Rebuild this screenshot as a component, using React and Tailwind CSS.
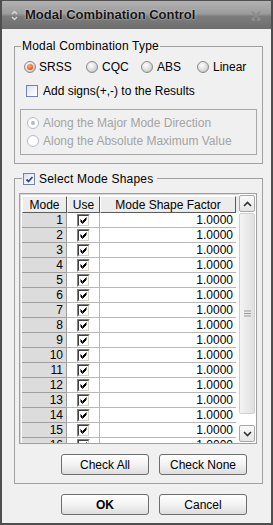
import React from "react";

function Radio({ checked, disabled }) {
  if (disabled) {
    return (
      <span className="relative flex h-[12px] w-[12px] shrink-0 items-center justify-center rounded-full border border-[#b4b9c8] bg-white">
        {checked && <span className="h-[4px] w-[4px] rounded-full bg-[#b8b8c0]" />}
      </span>
    );
  }
  return (
    <span className="relative flex h-[12px] w-[12px] shrink-0 items-center justify-center rounded-full border border-[#8a8a8a] bg-[radial-gradient(circle_at_40%_35%,#ffffff_0%,#e2e2e2_45%,#b4b4b4_100%)]">
      {checked && (
        <span className="h-[6px] w-[6px] rounded-full bg-[radial-gradient(circle_at_40%_35%,#ffb080_0%,#f06020_60%,#c84010_100%)]" />
      )}
    </span>
  );
}

function XPCheck({ checked }) {
  return (
    <span className="flex h-[12px] w-[12px] shrink-0 items-center justify-center border border-[#6f86a8] bg-[linear-gradient(135deg,#d8e0ec_0%,#f4f6fa_60%,#ffffff_100%)]">
      {checked && (
        <svg width="9" height="9" viewBox="0 0 9 9">
          <path d="M1.5 4.5 L3.5 6.5 L7.5 2" fill="none" stroke="#2a45b0" strokeWidth="1.8" />
        </svg>
      )}
    </span>
  );
}

function ClassicCheck() {
  return (
    <span className="flex h-[13px] w-[13px] items-center justify-center border-t border-l border-t-[#808080] border-l-[#808080] border-b border-r border-b-white border-r-white">
      <span className="flex h-[11px] w-[11px] items-center justify-center border-t border-l border-t-[#404040] border-l-[#404040] border-b border-r border-b-[#d4d0c8] border-r-[#d4d0c8] bg-white">
        <svg width="9" height="9" viewBox="0 0 9 9">
          <path d="M1.5 3.5 L3.5 5.5 L7.5 1.5 M1.5 4.5 L3.5 6.5 L7.5 2.5 M1.5 5.5 L3.5 7.5 L7.5 3.5" fill="none" stroke="#000" strokeWidth="1" />
        </svg>
      </span>
    </span>
  );
}

function Btn({ children, bold }) {
  return (
    <button className={`flex h-[21px] w-[88px] items-center justify-center rounded-[3px] border border-[#6e6e6e] bg-[linear-gradient(#ffffff,#f4f4f4_45%,#dedede)] text-[12px] text-black ${bold ? "font-bold" : ""}`}>
      {children}
    </button>
  );
}

export default function App() {
  const rows = Array.from({ length: 16 }, (_, i) => i + 1);
  return (
    <div className="flex h-[525px] w-[273px] flex-col overflow-hidden border-x-2 border-b-2 border-[#4e4e4e] bg-[#f0f0f0] font-['Liberation_Sans',Arial,sans-serif] text-[12px] text-black">
      {/* Title bar */}
      <div className="flex h-[29px] shrink-0 items-center border-t border-[#505050] bg-[linear-gradient(#b2b2b2,#9c9c9c_45%,#7c7c7c_55%,#6e6e6e)] pl-[9px] pr-[9px]">
        <svg width="7" height="11" viewBox="0 0 7 11" className="mr-[7px]">
          <path d="M1 4 L3.5 1.5 L6 4 M1 7 L3.5 9.5 L6 7" fill="none" stroke="#d8d8d8" strokeWidth="1.3" />
        </svg>
        <span className="text-[13px] font-bold text-[#151515] [text-shadow:0_0_2px_#e8e8e8]">Modal Combination Control</span>
        <span className="ml-auto">
          <svg width="12" height="11" viewBox="0 0 12 11">
            <path d="M1.5 1 L10.5 10 M10.5 1 L1.5 10" stroke="#8c8c8c" strokeWidth="1.6" />
            <path d="M2 1 L5 1 M7 1 L10 1 M2 10 L5 10 M7 10 L10 10" stroke="#a0a0a0" strokeWidth="1" />
          </svg>
        </span>
      </div>

      {/* Body */}
      <div className="flex flex-col pl-[12px] pr-[8px] pt-[17px]">
        {/* Group 1 */}
        <div className="relative h-[118px] border border-[#a0a0a0]">
          <span className="absolute left-[6px] top-[-9px] bg-[#f0f0f0] px-[1px] leading-[16px] tracking-[0.2px]">Modal Combination Type</span>
          <div className="mt-[13px] flex h-[14px] items-center pl-[9px]">
            <div className="flex w-[62px] items-center gap-[3px]"><Radio checked /><span>SRSS</span></div>
            <div className="flex w-[55px] items-center gap-[4px]"><Radio /><span>CQC</span></div>
            <div className="flex w-[56px] items-center gap-[4px]"><Radio /><span>ABS</span></div>
            <div className="flex items-center gap-[4px]"><Radio /><span>Linear</span></div>
          </div>
          <div className="mt-[10px] flex h-[14px] items-center gap-[5px] pl-[11px]">
            <XPCheck />
            <span>Add signs(+,-) to the Results</span>
          </div>
          <div className="mx-[5px] mt-[11px] flex h-[46px] flex-col gap-[4px] border border-[#a8a8a8] pl-[6px] pt-[6px] text-[#a4a4a4]">
            <div className="flex h-[14px] items-center gap-[4px]"><Radio checked disabled /><span>Along the Major Mode Direction</span></div>
            <div className="flex h-[14px] items-center gap-[4px]"><Radio disabled /><span>Along the Absolute Maximum Value</span></div>
          </div>
        </div>

        {/* Group 2 */}
        <div className="relative mt-[14px] h-[306px] border border-[#a0a0a0]">
          <div className="absolute left-[7px] top-[-8px] flex items-center gap-[4px] bg-[#f0f0f0] pl-[1px] pr-[4px] leading-[16px]">
            <XPCheck checked />
            <span className="tracking-[0.2px]">Select Mode Shapes</span>
          </div>
          {/* table */}
          <div className="ml-[4px] mt-[14px] flex h-[251px] w-[238px] border border-[#a0a0a0] bg-white">
            <div className="flex flex-1 flex-col overflow-hidden border-l border-t border-[#d8d8d8] pl-[1px] pt-[1px]">
              <div className="flex h-[17px] shrink-0 bg-[#ececec]">
                <div className="flex w-[45px] items-center justify-center border-r border-b border-[#5a5a5a] border-l border-t border-l-white border-t-white">Mode</div>
                <div className="flex w-[33px] items-center justify-center border-r border-b border-[#5a5a5a] border-l border-t border-l-white border-t-white">Use</div>
                <div className="flex w-[136px] items-center justify-center border-r border-b border-[#5a5a5a] border-l border-t border-l-white border-t-white">Mode Shape Factor</div>
              </div>
              {rows.map((n) => (
                <div key={n} className="flex h-[15px] shrink-0">
                  <div className="flex w-[45px] items-center justify-end border-b border-r border-[#a0a0a0] bg-[#dcdcdc] pr-[3px]">{n}</div>
                  <div className="flex w-[33px] items-center justify-center border-b border-r border-[#b8b8b8] pl-[1px]"><ClassicCheck /></div>
                  <div className="flex w-[136px] items-center justify-end border-b border-[#b8b8b8] pr-[3px]">1.0000</div>
                </div>
              ))}
            </div>
            {/* scrollbar */}
            <div className="flex w-[17px] shrink-0 flex-col bg-white pt-[1px] pr-[1px]">
              <div className="flex h-[17px] items-center justify-center rounded-[2px] border border-[#a8a8a8] bg-[linear-gradient(#fafafa,#e4e4e4)]">
                <svg width="9" height="6" viewBox="0 0 9 6"><path d="M1 5 L4.5 1.5 L8 5" fill="none" stroke="#303030" strokeWidth="1.6" /></svg>
              </div>
              <div className="mt-[1px] flex h-[201px] items-center justify-center rounded-[2px] border border-[#d0d0d0] bg-[linear-gradient(90deg,#f4f4f4,#e0e0e0)]">
                <svg width="7" height="7" viewBox="0 0 7 7"><path d="M0 1 H7 M0 3.5 H7 M0 6 H7" stroke="#9a9a9a" strokeWidth="1" /></svg>
              </div>
              <div className="flex-1" />
              <div className="mb-[1px] flex h-[17px] items-center justify-center rounded-[2px] border border-[#a8a8a8] bg-[linear-gradient(#fafafa,#e4e4e4)]">
                <svg width="9" height="6" viewBox="0 0 9 6"><path d="M1 1 L4.5 4.5 L8 1" fill="none" stroke="#303030" strokeWidth="1.6" /></svg>
              </div>
            </div>
          </div>
          <div className="mt-[10px] flex justify-end gap-[10px] pr-[15px]">
            <Btn>Check All</Btn>
            <Btn>Check None</Btn>
          </div>
        </div>

        <div className="mt-[10px] flex justify-end gap-[10px] pr-[16px]">
          <Btn bold>OK</Btn>
          <Btn>Cancel</Btn>
        </div>
      </div>
    </div>
  );
}
